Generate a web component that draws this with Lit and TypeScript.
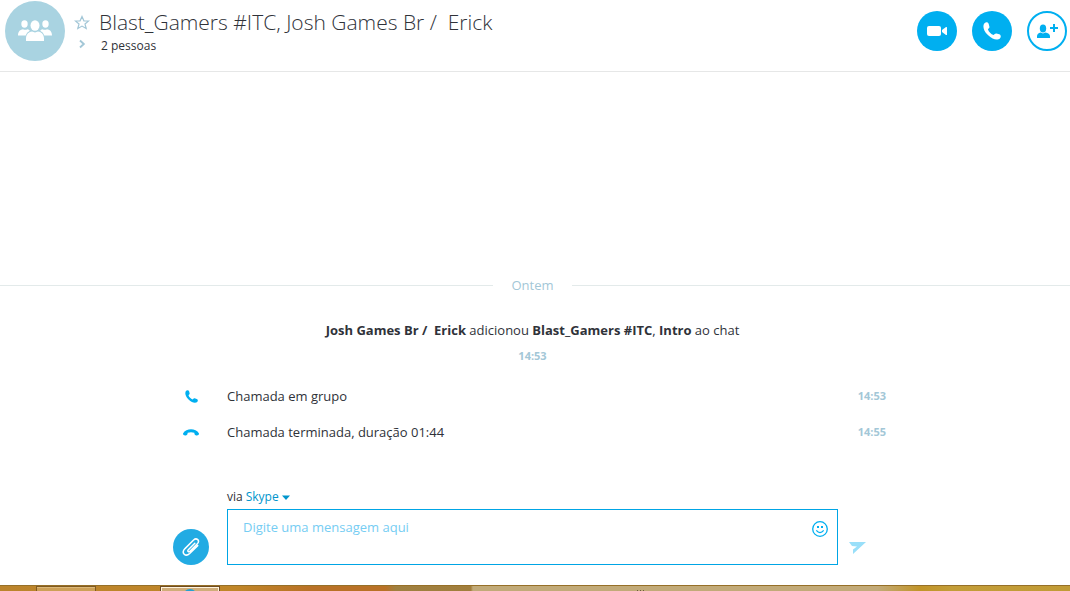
import { LitElement, html, css, svg } from "lit";
import { customElement, state } from "lit/decorators.js";

const handset = svg`<path d="M1.2 0.9C2.4-.3 4 .1 4.4 1.4L5 3.6C5.2 4.5 4.3 5.1 3.8 5.7C4.5 7.800 6.200 9.500 8.300 10.200C8.900 9.700 9.500 8.800 10.400 9L12.600 9.600C13.900 10 14.300 11.600 13.100 12.800C11.900 14 8.100 14.600 3.800 10.200C-.6 5.900 0 2.100 1.200 .9Z"/>`;

@customElement("app-root")
export class AppRoot extends LitElement {
  @state() private draft = "";

  private calls = [
    { kind: "start", text: "Chamada em grupo", time: "14:53" },
    { kind: "end", text: "Chamada terminada, duração 01:44", time: "14:55" },
  ];

  static styles = css`
    :host {
      display: flex;
      flex-direction: column;
      height: 100vh;
      background: #fff;
      color: #2f3239;
      font: 13px/20px "Open Sans", "Noto Sans", sans-serif;
    }
    * { box-sizing: border-box; }
    button, select, textarea {
      font: inherit;
      color: inherit;
      background: none;
      border: 0;
      margin: 0;
      padding: 0;
      appearance: none;
    }
    button, select { cursor: pointer; }
    svg { display: block; fill: currentColor; }
    header {
      display: flex;
      align-items: flex-start;
      height: 72px;
      flex: none;
      padding: 1px 3px 0 5px;
      border-bottom: 1px solid #e6e7e7;
    }
    .avatar {
      display: grid;
      place-items: center;
      width: 60px;
      height: 60px;
      border-radius: 50%;
      background: #a9d3e1;
      color: #fff;
    }
    .marks {
      display: grid;
      justify-items: center;
      gap: 9px;
      padding: 14px 0 0;
      margin: 0 9px;
      color: #a3c7d7;
    }
    .who { flex: 1; min-width: 0; }
    h1 {
      margin: 6px 0 0;
      font-size: 21px;
      font-weight: 300;
      line-height: 30px;
      white-space: pre;
    }
    .people { display: block; font-size: 12px; line-height: 18px; margin-left: 2px; }
    .actions { display: flex; gap: 15px; padding-top: 10px; }
    .round {
      display: grid;
      place-items: center;
      width: 40px;
      height: 40px;
      border-radius: 50%;
      background: #00aff0;
      color: #fff;
    }
    .outline { background: #fff; color: #00aff0; border: 2px solid #00aff0; }
    main {
      flex: 1;
      display: flex;
      flex-direction: column;
      justify-content: flex-end;
      align-items: center;
      padding-right: 5px;
      min-height: 0;
    }
    .day {
      display: flex;
      align-items: center;
      align-self: stretch;
      gap: 18px;
      margin-right: -5px;
      color: #a3c7d7;
    }
    .day::before, .day::after { content: ""; flex: 1; height: 1px; background: #e3eaea; }
    .day::before { margin-left: -5px; }
    .event { margin: 25px 0 8px; white-space: pre; }
    time { font-size: 11px; line-height: 16px; font-weight: 700; color: #a3c7d7; }
    .calls { list-style: none; margin: 22px 0 0; padding: 0; width: 100%; max-width: 707px; }
    .calls li {
      display: grid;
      grid-template-columns: 24px 1fr auto;
      column-gap: 24px;
      align-items: center;
      margin-bottom: 16px;
    }
    .calls svg { color: #00aff0; justify-self: center; }
    form {
      display: grid;
      grid-template-columns: 36px 1fr 36px;
      column-gap: 18px;
      width: 100%;
      max-width: 719px;
      margin: 30px 0 20px;
      align-items: end;
    }
    .via {
      grid-column: 2;
      display: flex;
      align-items: center;
      gap: 3px;
      height: 18px;
      margin-bottom: 3px;
      font-size: 12px;
    }
    .via select { color: #0095cc; }
    .via svg { color: #0095cc; }
    .attach { grid-column: 1; width: 36px; height: 36px; background: #22abe3; }
    .box { display: flex; align-items: flex-start; height: 56px; border: 1px solid #00a5e5; padding: 7px 9px 0 15px; }
    textarea { flex: 1; height: 40px; resize: none; outline: 0; line-height: 20px; }
    textarea::placeholder { color: #76cdf3; opacity: 1; }
    .emoji { color: #00aff0; padding-top: 4px; }
    .send { color: #99dff9; margin: 0 0 11px -7px; justify-self: start; }
    footer {
      display: flex;
      flex: none;
      height: 6px;
      border-top: 1px solid #967028;
      overflow: hidden;
      background: linear-gradient(90deg, #bb842c 0, #c08628 22%, #b97126 29%, #b97126 36%, #9f8040 37%, #a17e3c 44%, #c1aa78 44.2%, #c2aa78 82%, #c19428 86%, #c39d38 89%, #c19b36 100%);
    }
    .task { width: 60px; height: 10px; border: 1px solid #805a20; background: #cda056; box-shadow: inset 0 1px #dcb878; margin-left: 36px; }
    .active { margin-left: 64px; border-color: #6d4b22; background: #d0ad79; box-shadow: inset 0 0 0 1px #fff3dc; }
    .active svg { margin: 2px auto 0; color: #24a0d0; }
    .grip { width: 9px; height: 1px; margin: 4px 0 0 417px; background: repeating-linear-gradient(90deg, #6d5c3c 0 1px, transparent 1px 3px); }
  `;

  render() {
    return html`
      <header>
        <div class="avatar">
          <svg width="34" height="22" viewBox="0 0 34 22">
            <ellipse cx="6.500" cy="4" rx="3.200" ry="3.700"/><ellipse cx="27.500" cy="4" rx="3.200" ry="3.700"/>
            <ellipse cx="17" cy="5.500" rx="4.500" ry="5.200"/>
            <path d="M0 15.500C0 11 2.500 9.600 5 9.200Q7 10.200 9.500 9.200Q11 9.500 11.800 10.700Q8.500 12.200 7.700 15.500ZM34 15.500C34 11 31.500 9.600 29 9.200Q27 10.200 24.500 9.200Q23 9.500 22.200 10.700Q25.500 12.200 26.300 15.500Z"/>
            <path d="M8 21V18C8.400 14 11 12 14 11.600Q17 13.200 20 11.600C23 12 25.600 14 26 18V21Z"/>
          </svg>
        </div>
        <div class="marks">
          <svg width="16" height="15" viewBox="0 0 16 15"><path d="M8 1.500L9.900 5.800L14.600 6L11 9L12.200 13.600L8 11.100L3.800 13.600L5 9L1.400 6L6.100 5.800Z" fill="none" stroke="currentColor" stroke-width="1.200"/></svg>
          <svg width="7" height="10" viewBox="0 0 7 10"><path d="M1 1.500L4.800 5L1 8.500" fill="none" stroke="currentColor" stroke-width="1.900"/></svg>
        </div>
        <div class="who">
          <h1>Blast_Gamers #ITC, Josh Games Br /  Erick</h1>
          <span class="people">2 pessoas</span>
        </div>
        <div class="actions">
          <button class="round" aria-label="Chamada de vídeo">
            <svg width="20" height="10" viewBox="0 0 20 10"><rect width="14" height="10" rx="2"/><path d="M15 4L19 1Q20 .6 20 1.600V8.400Q20 9.400 19 9L15 6Z"/></svg>
          </button>
          <button class="round" aria-label="Chamada">
            <svg width="18" height="18" viewBox="0 0 14 14">${handset}</svg>
          </button>
          <button class="round outline" aria-label="Adicionar pessoas">
            <svg width="22" height="16" viewBox="0 0 22 16"><ellipse cx="7" cy="5.500" rx="3.200" ry="3.900"/><path d="M1 15V13Q1.300 10.400 4.600 9.600Q7 11.200 9.400 9.600Q13.700 10.400 14 13V15ZM17 1h2v3h3v2h-3v3h-2v-3h-3v-2h3z"/></svg>
          </button>
        </div>
      </header>
      <main>
        <div class="day">Ontem</div>
        <div class="event"><b>Josh Games Br /  Erick</b> adicionou <b>Blast_Gamers #ITC</b>, <b>Intro</b> ao chat</div>
        <time>14:53</time>
        <ul class="calls">
          ${this.calls.map((c) => html`<li>
            ${c.kind === "start"
              ? html`<svg width="13" height="13" viewBox="0 0 14 14">${handset}</svg>`
              : html`<svg width="16" height="7" viewBox="0 0 16 7"><path d="M0 4.500C1.500 1.500 5 .2 8 .2S14.500 1.500 16 4.500C16 6.500 14 6.700 12.600 6.200C11.400 5.800 11.500 4.700 11.300 3.800Q8 2.600 4.700 3.800C4.500 4.700 4.600 5.800 3.400 6.200C2 6.700 0 6.500 0 4.500Z"/></svg>`}
            <span>${c.text}</span><time>${c.time}</time>
          </li>`)}
        </ul>
        <form @submit=${(e: Event) => e.preventDefault()}>
          <div class="via">
            <label for="via">via</label>
            <select id="via"><option>Skype</option></select>
            <svg width="8" height="5" viewBox="0 0 8 5"><path d="M0 .5H8L4 5Z"/></svg>
          </div>
          <button class="round attach" type="button" aria-label="Anexar arquivo">
            <svg width="20" height="20" viewBox="0 0 20 20"><path d="M13.800 6.200L7.300 12.700C6 14 7.600 15.500 8.900 14.200L16.300 6.800C19.300 3.600 15.600 .2 12.600 3L4 11.600C-.3 16.200 4.600 20.300 8.700 16.500L16.700 8.600" fill="none" stroke="currentColor" stroke-width="1.500" stroke-linecap="round"/></svg>
          </button>
          <div class="box">
            <textarea aria-label="Mensagem" placeholder="Digite uma mensagem aqui" .value=${this.draft}
              @input=${(e: Event) => (this.draft = (e.target as HTMLTextAreaElement).value)}></textarea>
            <button class="emoji" type="button" aria-label="Emoticons">
              <svg width="16" height="16" viewBox="0 0 16 16"><circle cx="8" cy="8" r="7.300" fill="none" stroke="currentColor" stroke-width="1.300"/><rect x="5" y="5" width="2" height="2"/><rect x="9" y="5" width="2" height="2"/><path d="M4.300 9.300Q8 13.800 11.700 9.300" fill="none" stroke="currentColor" stroke-width="1.300"/></svg>
            </button>
          </div>
          <button class="send" aria-label="Enviar">
            <svg width="17" height="12" viewBox="0 0 17 12"><path d="M0 0H17L4 12V7.500L8 4.500L3 4Z"/></svg>
          </button>
        </form>
      </main>
      <footer>
        <div class="task"></div>
        <div class="task active"><svg width="14" height="8" viewBox="0 0 14 8"><circle cx="7" cy="7" r="7"/></svg></div>
        <div class="grip"></div>
      </footer>
    `;
  }
}
